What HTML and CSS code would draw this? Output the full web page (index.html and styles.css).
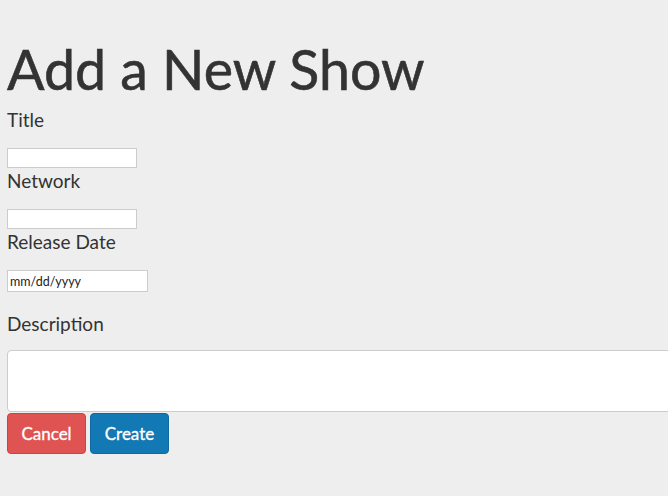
FILE: index.html
```html
<!DOCTYPE html>
<html>
<head>
<meta charset="utf-8">
<link rel="stylesheet" href="styles.css">
</head>
<body>
<h1 class="title">Add a New Show</h1>
<form class="form">
  <label class="label" for="t">Title</label>
  <input class="field" id="t" type="text">
  <label class="label" for="n">Network</label>
  <input class="field" id="n" type="text">
  <label class="label" for="d">Release Date</label>
  <input class="field date" id="d" type="text" value="mm/dd/yyyy">
  <label class="label desc-label" for="x">Description</label>
  <textarea class="area" id="x"></textarea>
  <div class="actions">
    <button type="button" class="btn cancel">Cancel</button>
    <button type="button" class="btn create">Create</button>
  </div>
</form>
</body>
</html>
```
FILE: styles.css
```css
html, body {
  margin: 0;
  padding: 0;
  background: #eeeeee;
  overflow: hidden;
}
body {
  padding: 0 0 0 7px;
  font-family: Lato, "Open Sans", sans-serif;
  color: #333333;
}
.title {
  margin: 0;
  box-sizing: border-box;
  padding-top: 30px;
  height: 107px;
  font-size: 55.5px;
  font-weight: 400;
  line-height: 1;
  display: flex;
  align-items: center;
  -webkit-text-stroke: 0.6px #333333;
}
.form {
  display: flex;
  flex-direction: column;
  align-items: flex-start;
}
.label {
  display: block;
  height: 41px;
  font-size: 19px;
  line-height: 25px;
}
.field {
  display: block;
  box-sizing: border-box;
  width: 130px;
  height: 20px;
  margin: 0;
  padding: 0 2px;
  border: 1px solid #cccccc;
  background: #ffffff;
  font-family: Lato, sans-serif;
}
.date {
  width: 141px;
  height: 22px;
  font-size: 12.5px;
  color: #222222;
  margin-bottom: 19px;
}
.desc-label {
  height: 39px;
}
.area {
  display: block;
  box-sizing: border-box;
  width: 700px;
  height: 62px;
  margin: 0;
  border: 1px solid #cccccc;
  border-radius: 4px;
  background: #ffffff;
  resize: none;
}
.actions {
  display: flex;
  gap: 4px;
  margin-top: 1px;
}
.btn {
  box-sizing: border-box;
  width: 79px;
  height: 41px;
  border-radius: 4px;
  font-family: Lato, sans-serif;
  font-size: 17px;
  color: #ffffff;
  cursor: pointer;
  -webkit-text-stroke: 0.3px #ffffff;
}
.cancel {
  background: #e05353;
  border: 1px solid #d43f3a;
}
.create {
  background: #1279b4;
  border: 1px solid #0f6a9f;
}
```
